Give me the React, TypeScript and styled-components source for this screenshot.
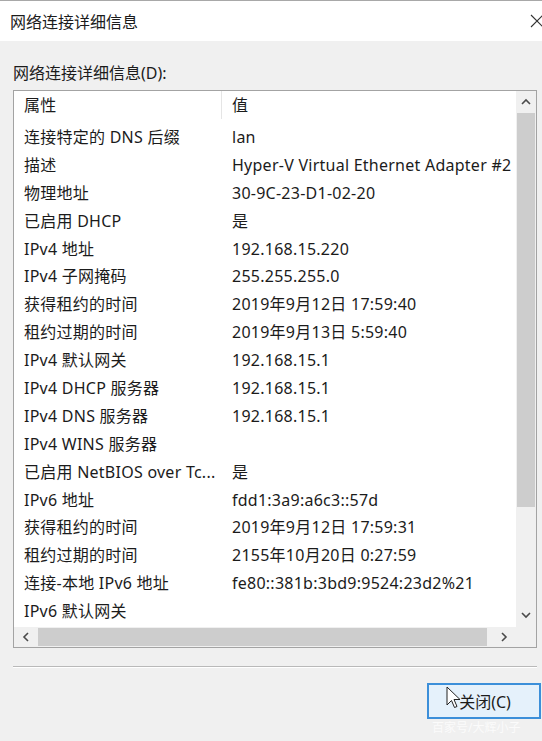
import styled, { createGlobalStyle } from 'styled-components';

const GlobalStyle = createGlobalStyle`
	html, body {
		margin: 0;
		padding: 0;
		background: #f0f0f0;
		overflow: hidden;
	}
	body {
		font-family: "Noto Sans", "Noto Sans CJK SC", sans-serif;
		color: #1b1b1b;
	}
`;

const Window = styled.div`
	position: relative;
	width: 542px;
	height: 741px;
	display: flex;
	flex-direction: column;
	background: #f0f0f0;
`;

const TitleBar = styled.header`
	height: 40px;
	flex-shrink: 0;
	background: #fff;
	border-top: 1px solid #a8a8a8;
	display: flex;
	align-items: center;
	justify-content: space-between;
	padding-left: 10px;
	font-size: 16px;
`;

const CloseIcon = styled.svg`
	margin-right: -2px;
`;

const Body = styled.main`
	padding: 0 4px 0 13px;
	display: flex;
	flex-direction: column;
`;

const Label = styled.div`
	margin-top: 22px;
	line-height: 20px;
	font-size: 16px;
	height: 20px;
`;

const ListBox = styled.div`
	margin-top: 7px;
	width: 524px;
	height: 558px;
	box-sizing: border-box;
	border: 1px solid #a3a3a3;
	background: #fff;
	display: grid;
	grid-template-columns: 502px 20px;
	grid-template-rows: 536px 20px;
	overflow: hidden;
`;

const Content = styled.div`
	overflow: hidden;
`;

const Row = styled.div<{ $head?: boolean }>`
	display: grid;
	grid-template-columns: 208px 1fr;
	height: ${(p) => (p.$head ? 32 : 27.9)}px;
	line-height: 28px;
	font-size: 16px;
	letter-spacing: 0.25px;
	white-space: nowrap;
	padding-bottom: ${(p) => (p.$head ? 4 : 0)}px;
	box-sizing: border-box;
`;

const Cell = styled.div<{ $divider?: boolean }>`
	padding-left: 10px;
	overflow: hidden;
	border-right: ${(p) => (p.$divider ? '1px solid #e5e5e5' : 'none')};
`;

const VScroll = styled.div`
	background: #f0f0f0;
	display: flex;
	flex-direction: column;
`;

const HScroll = styled.div`
	background: #f0f0f0;
	display: flex;
	align-items: center;
`;

const ArrowBtn = styled.div<{ $w: number; $h: number }>`
	width: ${(p) => p.$w}px;
	height: ${(p) => p.$h}px;
	flex-shrink: 0;
	display: flex;
	align-items: center;
	justify-content: center;
`;

const VThumb = styled.div`
	margin: 1px 1px 0 1px;
	height: 394px;
	background: #cdcdcd;
`;

const HThumb = styled.div`
	margin: 1px 0;
	height: 18px;
	width: 449px;
	background: #cdcdcd;
`;

const Spacer = styled.div`
	flex: 1;
`;

const Corner = styled.div`
	background: #f0f0f0;
`;

const Separator = styled.hr`
	margin: 18px 0 0 0;
	width: 524px;
	border: none;
	border-top: 1px solid #b9b9b9;
	border-bottom: 1px solid #ffffff;
`;

const Footer = styled.div`
	display: flex;
	justify-content: flex-end;
	margin-top: 15px;
	margin-right: -3px;
`;

const CloseButton = styled.button`
	width: 114px;
	height: 36px;
	box-sizing: border-box;
	border: 2px solid #3c8fd9;
	background: #e5f1fb;
	font-family: inherit;
	font-size: 16px;
	color: #1b1b1b;
	padding: 0 0 0 2px;
`;

const Cursor = styled.svg`
	position: absolute;
	left: 446px;
	top: 686px;
`;

const Watermark = styled.div`
	position: absolute;
	left: 432px;
	top: 718px;
	font-size: 12px;
	color: rgba(255, 255, 255, 0.75);
	white-space: nowrap;
`;

const rows: [string, string][] = [
	['连接特定的 DNS 后缀', 'lan'],
	['描述', 'Hyper-V Virtual Ethernet Adapter #2'],
	['物理地址', '30-9C-23-D1-02-20'],
	['已启用 DHCP', '是'],
	['IPv4 地址', '192.168.15.220'],
	['IPv4 子网掩码', '255.255.255.0'],
	['获得租约的时间', '2019年9月12日 17:59:40'],
	['租约过期的时间', '2019年9月13日 5:59:40'],
	['IPv4 默认网关', '192.168.15.1'],
	['IPv4 DHCP 服务器', '192.168.15.1'],
	['IPv4 DNS 服务器', '192.168.15.1'],
	['IPv4 WINS 服务器', ''],
	['已启用 NetBIOS over Tc...', '是'],
	['IPv6 地址', 'fdd1:3a9:a6c3::57d'],
	['获得租约的时间', '2019年9月12日 17:59:31'],
	['租约过期的时间', '2155年10月20日 0:27:59'],
	['连接-本地 IPv6 地址', 'fe80::381b:3bd9:9524:23d2%21'],
	['IPv6 默认网关', ''],
];

function Chevron({ dir }: { dir: 'up' | 'down' | 'left' | 'right' }) {
	const pts = {
		up: '1,6 5,2 9,6',
		down: '1,2 5,6 9,2',
		left: '6,1 2,5 6,9',
		right: '2,1 6,5 2,9',
	}[dir];
	const vertical = dir === 'up' || dir === 'down';
	return (
		<svg width={vertical ? 10 : 8} height={vertical ? 8 : 10}>
			<polyline points={pts} fill="none" stroke="#4a4a4a" strokeWidth="1.6" />
		</svg>
	);
}

function App() {
	return (
		<Window>
			<GlobalStyle />
			<TitleBar>
				<span>网络连接详细信息</span>
				<CloseIcon width="14" height="14" viewBox="0 0 14 14">
					<path d="M1 1 L13 13 M13 1 L1 13" stroke="#333" strokeWidth="1.1" />
				</CloseIcon>
			</TitleBar>
			<Body>
				<Label>网络连接详细信息(D):</Label>
				<ListBox>
					<Content>
						<Row $head>
							<Cell $divider>属性</Cell>
							<Cell>值</Cell>
						</Row>
						{rows.map(([k, v], i) => (
							<Row key={i}>
								<Cell>{k}</Cell>
								<Cell>{v}</Cell>
							</Row>
						))}
					</Content>
					<VScroll>
						<ArrowBtn $w={20} $h={21}>
							<Chevron dir="up" />
						</ArrowBtn>
						<VThumb />
						<Spacer />
						<ArrowBtn $w={20} $h={24}>
							<Chevron dir="down" />
						</ArrowBtn>
					</VScroll>
					<HScroll>
						<ArrowBtn $w={24} $h={20}>
							<Chevron dir="left" />
						</ArrowBtn>
						<HThumb />
						<Spacer />
						<ArrowBtn $w={24} $h={20}>
							<Chevron dir="right" />
						</ArrowBtn>
					</HScroll>
					<Corner />
				</ListBox>
				<Separator />
				<Footer>
					<CloseButton>关闭(C)</CloseButton>
				</Footer>
			</Body>
			<Cursor width="16" height="24" viewBox="0 0 16 24">
				<path d="M1 1 L1 19 L5.5 14.5 L8.5 21.5 L11 20.5 L8 13.5 L14 13.5 Z" fill="#fff" stroke="#222" strokeWidth="1" />
			</Cursor>
			<Watermark>百家号/大辉小子</Watermark>
		</Window>
	);
}

export default App;
